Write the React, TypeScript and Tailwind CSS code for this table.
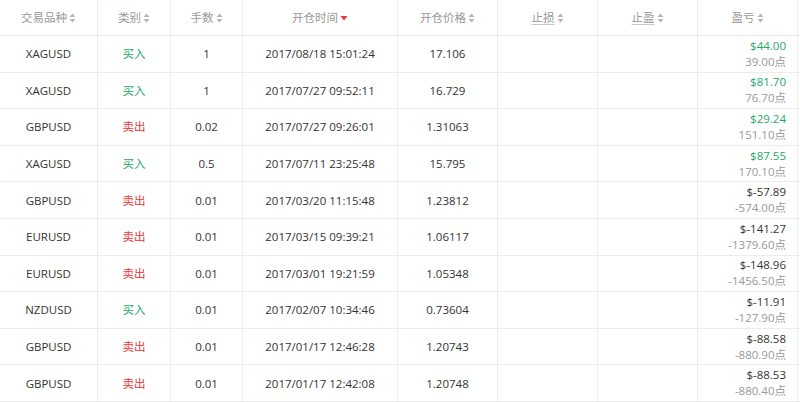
import React from "react";

type Row = {
  sym: string;
  buy: boolean;
  lots: string;
  time: string;
  price: string;
  pl: string;
  pts: string;
};

const rows: Row[] = [
  { sym: "XAGUSD", buy: true, lots: "1", time: "2017/08/18 15:01:24", price: "17.106", pl: "$44.00", pts: "39.00点" },
  { sym: "XAGUSD", buy: true, lots: "1", time: "2017/07/27 09:52:11", price: "16.729", pl: "$81.70", pts: "76.70点" },
  { sym: "GBPUSD", buy: false, lots: "0.02", time: "2017/07/27 09:26:01", price: "1.31063", pl: "$29.24", pts: "151.10点" },
  { sym: "XAGUSD", buy: true, lots: "0.5", time: "2017/07/11 23:25:48", price: "15.795", pl: "$87.55", pts: "170.10点" },
  { sym: "GBPUSD", buy: false, lots: "0.01", time: "2017/03/20 11:15:48", price: "1.23812", pl: "$-57.89", pts: "-574.00点" },
  { sym: "EURUSD", buy: false, lots: "0.01", time: "2017/03/15 09:39:21", price: "1.06117", pl: "$-141.27", pts: "-1379.60点" },
  { sym: "EURUSD", buy: false, lots: "0.01", time: "2017/03/01 19:21:59", price: "1.05348", pl: "$-148.96", pts: "-1456.50点" },
  { sym: "NZDUSD", buy: true, lots: "0.01", time: "2017/02/07 10:34:46", price: "0.73604", pl: "$-11.91", pts: "-127.90点" },
  { sym: "GBPUSD", buy: false, lots: "0.01", time: "2017/01/17 12:46:28", price: "1.20743", pl: "$-88.58", pts: "-880.90点" },
  { sym: "GBPUSD", buy: false, lots: "0.01", time: "2017/01/17 12:42:08", price: "1.20748", pl: "$-88.53", pts: "-880.40点" },
];

const widths = ["w-[98px]", "w-[73px]", "w-[72px]", "w-[155px]", "w-[100px]", "w-[100px]", "w-[100px]", "w-[100px]"];

function SortIcon() {
  return (
    <svg width="7" height="10" viewBox="0 0 7 10" className="ml-[2px]">
      <path d="M3.5 0.5 L6.5 4 L0.5 4 Z" fill="#b5b5b5" />
      <path d="M0.5 6 L6.5 6 L3.5 9.5 Z" fill="#b5b5b5" />
    </svg>
  );
}

function DownIcon() {
  return (
    <svg width="8" height="6" viewBox="0 0 8 6" className="ml-[2px]">
      <path d="M0.5 1 L7.5 1 L4 5.5 Z" fill="#e8393a" />
    </svg>
  );
}

const headers: { t: string; active?: boolean; u?: boolean }[] = [
  { t: "交易品种" },
  { t: "类别" },
  { t: "手数" },
  { t: "开仓时间", active: true },
  { t: "开仓价格" },
  { t: "止损", u: true },
  { t: "止盈", u: true },
  { t: "盈亏" },
];

export default function App() {
  const font = { fontFamily: '"Open Sans", "Noto Sans CJK SC", sans-serif' };
  return (
    <div className="w-[800px] h-[402px] overflow-hidden bg-white text-[11.5px]" style={font}>
      <div className="flex h-[36px] border-b border-[#e6e6e6]">
        {headers.map((h, i) => (
          <div
            key={i}
            className={`${widths[i]} shrink-0 flex items-center justify-center text-[#999] border-r border-[#ececec]`}
          >
            <span className={h.u ? "underline decoration-[#c8c8c8] underline-offset-2" : ""}>{h.t}</span>
            {h.active ? <DownIcon /> : <SortIcon />}
          </div>
        ))}
      </div>
      {rows.map((r, ri) => (
        <div key={ri} className="flex h-[36.6px] border-b border-[#ececec] text-[#333]">
          <div className={`${widths[0]} shrink-0 flex items-center justify-center border-r border-[#ececec]`}>{r.sym}</div>
          <div
            className={`${widths[1]} shrink-0 flex items-center justify-center border-r border-[#ececec] ${
              r.buy ? "text-[#27a86b]" : "text-[#e8393a]"
            }`}
          >
            {r.buy ? "买入" : "卖出"}
          </div>
          <div className={`${widths[2]} shrink-0 flex items-center justify-center border-r border-[#ececec]`}>{r.lots}</div>
          <div className={`${widths[3]} shrink-0 flex items-center justify-center border-r border-[#ececec]`}>{r.time}</div>
          <div className={`${widths[4]} shrink-0 flex items-center justify-center border-r border-[#ececec]`}>{r.price}</div>
          <div className={`${widths[5]} shrink-0 border-r border-[#ececec]`} />
          <div className={`${widths[6]} shrink-0 border-r border-[#ececec]`} />
          <div className={`${widths[7]} shrink-0 flex flex-col items-end justify-center pr-[11px] leading-[16px] border-r border-[#ececec]`}>
            <span className={r.pl.startsWith("$-") ? "text-[#333]" : "text-[#27a86b]"}>{r.pl}</span>
            <span className="text-[#999]">{r.pts}</span>
          </div>
        </div>
      ))}
    </div>
  );
}
